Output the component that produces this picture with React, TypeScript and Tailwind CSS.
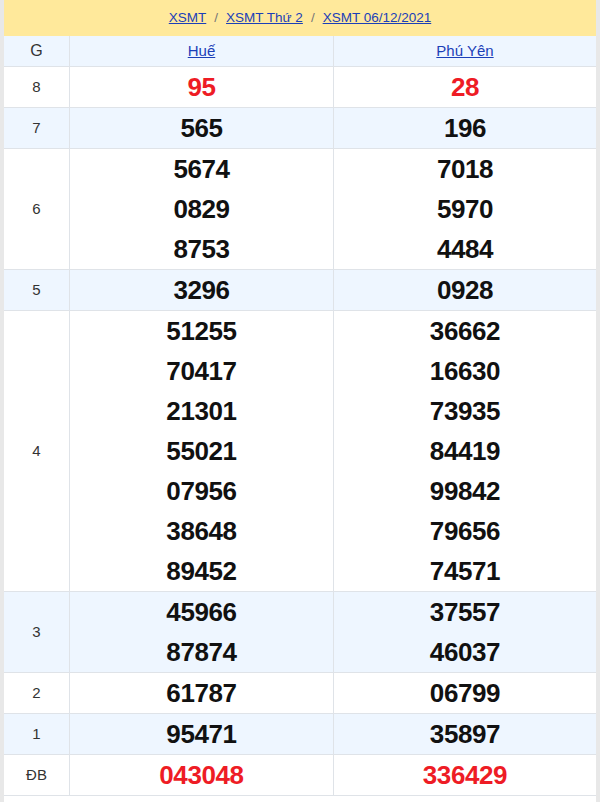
const rows: { g: string; a: string[]; b: string[]; red?: boolean; alt?: boolean }[] = [
  { g: "8", a: ["95"], b: ["28"], red: true },
  { g: "7", a: ["565"], b: ["196"], alt: true },
  { g: "6", a: ["5674", "0829", "8753"], b: ["7018", "5970", "4484"] },
  { g: "5", a: ["3296"], b: ["0928"], alt: true },
  {
    g: "4",
    a: ["51255", "70417", "21301", "55021", "07956", "38648", "89452"],
    b: ["36662", "16630", "73935", "84419", "99842", "79656", "74571"],
  },
  { g: "3", a: ["45966", "87874"], b: ["37557", "46037"], alt: true },
  { g: "2", a: ["61787"], b: ["06799"] },
  { g: "1", a: ["95471"], b: ["35897"], alt: true },
  { g: "ĐB", a: ["043048"], b: ["336429"], red: true },
];

function Cell({ nums, red }: { nums: string[]; red?: boolean }) {
  return (
    <div className="flex flex-col items-center border-l border-[#dfe3e8]">
      {nums.map((n, i) => (
        <div
          key={i}
          className={`h-10 leading-10 text-[26px] font-bold tracking-[-0.4px] ${red ? "text-[#ee1c25]" : "text-[#111]"}`}
        >
          {n}
        </div>
      ))}
    </div>
  );
}

export default function App() {
  return (
    <div className="min-h-[802px] bg-white border-x-4 border-[#e8e8e8] font-['Liberation_Sans',sans-serif]">
      <div className="h-9 bg-[#ffe99b] flex items-center justify-center gap-2 text-[13.5px] text-[#777]">
        <a href="#" className="text-[#1b3fb8] underline">XSMT</a>
        <span>/</span>
        <a href="#" className="text-[#1b3fb8] underline">XSMT Thứ 2</a>
        <span>/</span>
        <a href="#" className="text-[#1b3fb8] underline">XSMT 06/12/2021</a>
      </div>
      <div className="grid grid-cols-[65px_264px_1fr] h-[31px] bg-[#eef6ff] border-b border-[#dfe3e8] text-[15px]">
        <div className="flex items-center justify-center text-[16px] text-[#333]">G</div>
        <div className="flex items-center justify-center border-l border-[#dfe3e8]">
          <a href="#" className="text-[#1b3fb8] underline">Huế</a>
        </div>
        <div className="flex items-center justify-center border-l border-[#dfe3e8]">
          <a href="#" className="text-[#1b3fb8] underline">Phú Yên</a>
        </div>
      </div>
      {rows.map((r) => (
        <div
          key={r.g}
          className={`grid grid-cols-[65px_264px_1fr] border-b border-[#dfe3e8] ${r.alt ? "bg-[#eef6ff]" : "bg-white"}`}
        >
          <div className="flex items-center justify-center text-[15px] text-[#333]">
            {r.g}
          </div>
          <Cell nums={r.a} red={r.red} />
          <Cell nums={r.b} red={r.red} />
        </div>
      ))}
    </div>
  );
}
